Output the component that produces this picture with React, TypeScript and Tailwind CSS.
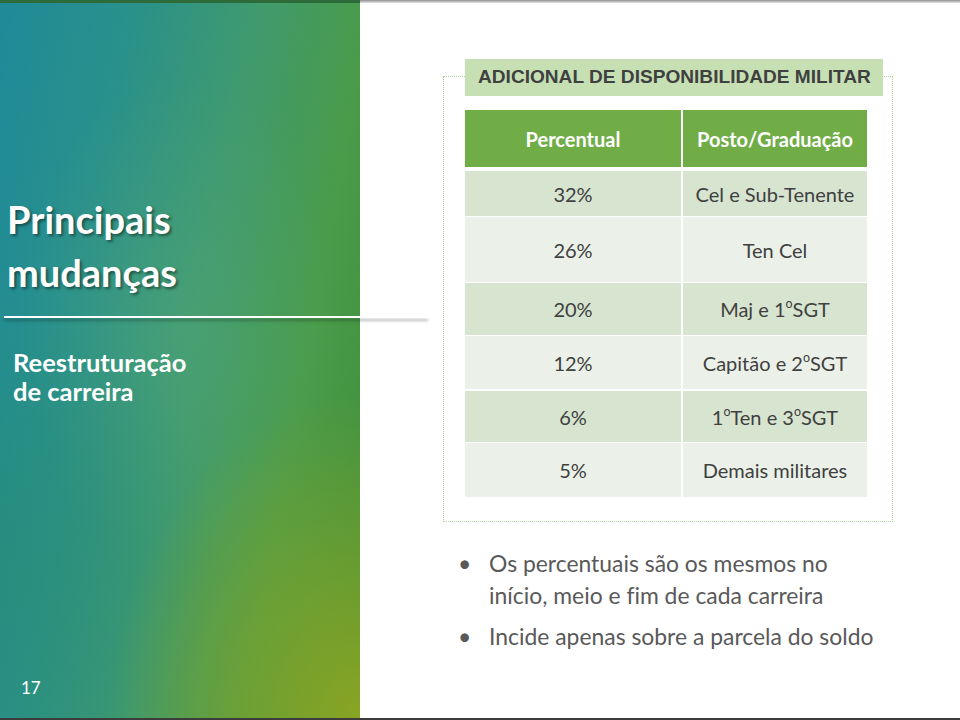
import React from 'react';

// Slide 17: "Principais mudanças" - Adicional de Disponibilidade Militar
const Ord: React.FC = () => <sup className="text-[0.62em] -top-[0.4em]">o</sup>;

const rows: { pct: string; posto: React.ReactNode; h: string; mt: string; bg: string }[] = [
    { pct: '32%', posto: 'Cel e Sub-Tenente', h: 'h-[45px]', mt: 'mt-[4px]', bg: 'bg-[#d6e4d0]' },
    { pct: '26%', posto: 'Ten Cel', h: 'h-[65px]', mt: 'mt-[1px]', bg: 'bg-[#ebf1e8]' },
    { pct: '20%', posto: <>Maj e 1<Ord />SGT</>, h: 'h-[52px]', mt: 'mt-[1px]', bg: 'bg-[#d6e4d0]' },
    { pct: '12%', posto: <>Capitão e 2<Ord />SGT</>, h: 'h-[53px]', mt: 'mt-[1px]', bg: 'bg-[#ebf1e8]' },
    { pct: '6%', posto: <>1<Ord />Ten e 3<Ord />SGT</>, h: 'h-[51px]', mt: 'mt-[2px]', bg: 'bg-[#d6e4d0]' },
    { pct: '5%', posto: 'Demais militares', h: 'h-[54px]', mt: 'mt-[1px]', bg: 'bg-[#ebf1e8]' },
];

const App: React.FC = () => {
    return (
        <div className="w-[960px] h-[720px] flex flex-col bg-white overflow-hidden font-['Lato',sans-serif] [font-variant-ligatures:none]">
            {/* top edge */}
            <div className="h-[3px] flex shrink-0">
                <div className="w-[360px] bg-[#2e6b3b]" />
                <div className="flex-1 bg-gradient-to-b from-[#8f8f8f] to-[#e6e6e6]" />
            </div>

            <div className="flex flex-1 min-h-0">
                {/* left panel */}
                <div className="w-[360px] shrink-0 flex flex-col text-white bg-[radial-gradient(ellipse_70%_45%_at_100%_100%,rgba(142,166,34,0.95)_0%,rgba(142,166,34,0)_100%),radial-gradient(ellipse_60%_40%_at_0%_80%,rgba(40,140,115,0.6)_0%,rgba(40,140,115,0)_100%),radial-gradient(ellipse_45%_35%_at_50%_45%,rgba(90,170,120,0.35)_0%,rgba(90,170,120,0)_100%),linear-gradient(100deg,#1f8a98_0%,#2a918a_28%,#3f9a70_52%,#4a9b4a_76%,#3e8f3a_100%)]">
                    <h1 className="mt-[190px] pl-[7px] text-[38px] leading-[53px] font-bold [text-shadow:2px_2px_3px_rgba(0,0,0,0.45)]">
                        Principais<br />mudanças
                    </h1>
                    <div className="relative z-10 mt-[17px] ml-[4px] w-[424px] h-[2px] bg-white shadow-[0_3px_3px_rgba(0,0,0,0.3)]" />
                    <h2 className="mt-[30px] pl-[13px] text-[25.5px] leading-[29px] font-bold">
                        Reestruturação<br />de carreira
                    </h2>
                    <div className="mt-auto pb-[19px] pl-[21px] text-[17px] leading-[22px]">17</div>
                </div>

                {/* right panel */}
                <div className="flex-1 flex flex-col">
                    <div className="mt-[73px] ml-[83px] w-[450px] h-[446px] border border-dotted border-[#b3d59c]">
                        <div className="-mt-[18px] ml-[21px] w-[418px] h-[37px] bg-[#c6e0b4] flex items-center pl-[13px] font-['Liberation_Sans',Arial,sans-serif] font-bold text-[19.1px] text-[#404040] whitespace-nowrap">
                            ADICIONAL DE DISPONIBILIDADE MILITAR
                        </div>

                        <div className="mt-[14px] ml-[21px] w-[402px] flex flex-col">
                            <div className="h-[57px] flex gap-[2px] text-white font-bold text-[20px]">
                                <div className="w-[216px] bg-[#70ad47] flex items-center justify-center">Percentual</div>
                                <div className="flex-1 bg-[#70ad47] flex items-center justify-center">Posto/Graduação</div>
                            </div>
                            {rows.map((r) => (
                                <div key={r.pct} className={`${r.h} ${r.mt} flex gap-[2px] text-[20px] text-[#404040]`}>
                                    <div className={`w-[216px] ${r.bg} flex items-center justify-center`}>{r.pct}</div>
                                    <div className={`flex-1 ${r.bg} flex items-center justify-center`}>{r.posto}</div>
                                </div>
                            ))}
                        </div>
                    </div>

                    <ul className="mt-[25px] ml-[98px] text-[22.9px] leading-[32px] text-[#595959]">
                        <li className="flex">
                            <span className="w-[31px] shrink-0">•</span>
                            <span>Os percentuais são os mesmos no<br />início, meio e fim de cada carreira</span>
                        </li>
                        <li className="flex mt-[9px]">
                            <span className="w-[31px] shrink-0">•</span>
                            <span>Incide apenas sobre a parcela do soldo</span>
                        </li>
                    </ul>
                </div>
            </div>

            {/* bottom edge */}
            <div className="h-[2px] shrink-0 bg-[#3c3c3c]" />
        </div>
    );
};

export default App;
